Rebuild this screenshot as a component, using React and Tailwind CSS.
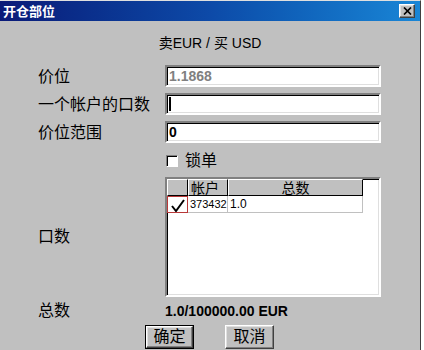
import React from "react";

const cjk = { fontFamily: '"Liberation Sans", "Noto Sans CJK SC", sans-serif' };

const sunken =
  "border-2 border-t-[#808080] border-l-[#808080] border-b-white border-r-white shadow-[inset_1px_1px_0_#000000,inset_-1px_-1px_0_#dfdfdf]";

const raised =
  "border border-t-white border-l-white border-b-[#404040] border-r-[#404040] shadow-[inset_-1px_-1px_0_#808080,inset_1px_1px_0_#dfdfdf]";

const headCell =
  "bg-[#c0c0c0] border border-t-white border-l-white border-r-black border-b-black";

function Field({ label, children, className = "" }) {
  return (
    <>
      <div className={`flex items-center text-[16px] text-black ${className}`}>{label}</div>
      <div className={`h-[22px] bg-white ${sunken} flex items-center px-[2px] ${className}`}>{children}</div>
    </>
  );
}

export default function App() {
  return (
    <div className="w-[424px] h-[350px] bg-white flex overflow-hidden" style={cjk}>
      <div className="w-[421px] h-[350px] shrink-0 bg-[#c0c0c0] border-t border-t-[#dfdfdf] border-r border-r-[#404040] flex flex-col">
        {/* title bar */}
        <div className="h-[20px] shrink-0 bg-gradient-to-r from-[#0a1a78] via-[#0d4aa8] to-[#1a86d6] flex items-center justify-between pl-[3px] pr-[5px]">
          <span className="text-white font-bold text-[13px] leading-none">开仓部位</span>
          <div className={`w-[16px] h-[14px] bg-[#c0c0c0] ${raised} flex items-center justify-center`}>
            <svg width="9" height="8" viewBox="0 0 9 8">
              <path d="M1 0.5 L8 7.5 M8 0.5 L1 7.5" stroke="#000" strokeWidth="1.7" />
            </svg>
          </div>
        </div>

        {/* heading */}
        <div className="h-[44px] shrink-0 flex items-center justify-center text-[14px] text-black">
          卖EUR / 买 USD
        </div>

        <div className="grid grid-cols-[127px_216px] pl-[38px] shrink-0">
          <Field label="价位">
            <span className="text-[14px] font-bold text-[#808080] leading-none">1.1868</span>
          </Field>
          <Field label="一个帐户的口数" className="mt-[4px]">
            <span className="w-[2px] h-[14px] bg-black" />
          </Field>
          <Field label="价位范围" className="mt-[4px]">
            <span className="text-[14px] font-bold text-black leading-none">0</span>
          </Field>

          <div />
          <div className="h-[32px] flex items-center gap-[7px] pl-[1px]">
            <span className="w-[12px] h-[12px] bg-white border border-t-[#808080] border-l-[#808080] border-b-white border-r-white shadow-[inset_1px_1px_0_#000000]" />
            <span className="text-[16px] text-black">锁单</span>
          </div>

          <div className="flex items-center text-[16px] text-black">口数</div>
          <div className={`h-[120px] bg-white ${sunken} flex flex-col`}>
            <div className="flex h-[17px] text-[14px] text-black leading-none">
              <div className={`w-[21px] ${headCell}`} />
              <div className={`w-[40px] ${headCell} flex items-center pl-[2px]`}>帐户</div>
              <div className={`w-[135px] ${headCell} flex items-center justify-center`}>总数</div>
            </div>
            <div className="flex h-[17px] text-[11px] text-black leading-none">
              <div className="w-[21px] border border-[#b83838] flex items-end justify-center overflow-hidden">
                <svg width="16" height="13" viewBox="0 0 16 13">
                  <path d="M2 7 L6 12 L14 1" stroke="#000" strokeWidth="2" fill="none" />
                </svg>
              </div>
              <div className="w-[40px] border-r border-b border-[#c0c0c0] flex items-center pl-[2px]">373432</div>
              <div className="w-[135px] border-r border-b border-[#c0c0c0] flex items-center pl-[2px] text-[12px]">1.0</div>
            </div>
          </div>

          <div className="h-[28px] flex items-center text-[16px] text-black">总数</div>
          <div className="h-[28px] flex items-center text-[14px] font-bold text-black">1.0/100000.00 EUR</div>
        </div>

        <div className="flex gap-[31px] pl-[145px] shrink-0">
          <button className="w-[49px] h-[24px] border border-black bg-[#c0c0c0] p-0">
            <div className={`w-full h-full ${raised} flex items-center justify-center text-[16px] text-black`}>确定</div>
          </button>
          <button className={`w-[49px] h-[24px] bg-[#c0c0c0] ${raised} flex items-center justify-center text-[16px] text-black`}>
            取消
          </button>
        </div>
      </div>
    </div>
  );
}
